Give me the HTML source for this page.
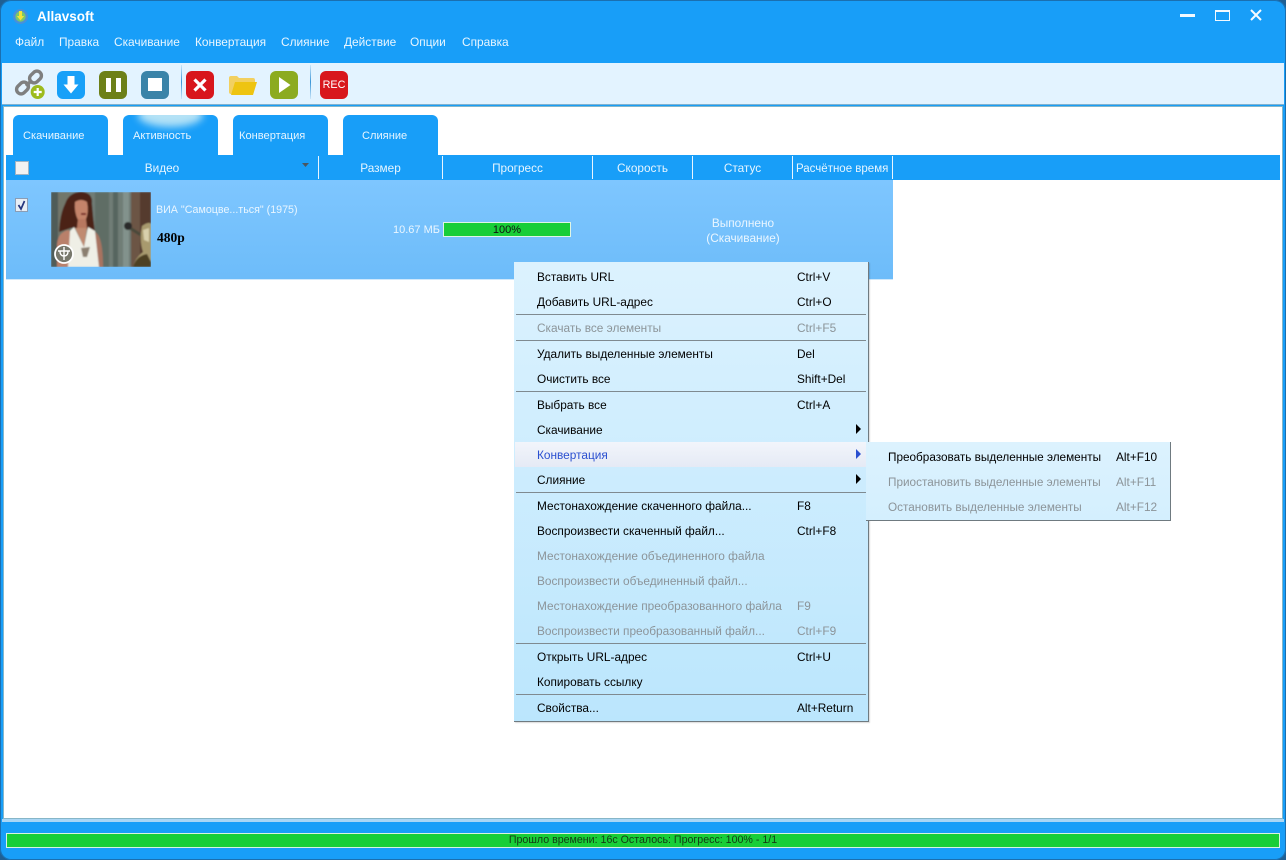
<!DOCTYPE html>
<html><head><meta charset="utf-8"><style>
html,body{margin:0;padding:0;width:1286px;height:860px;overflow:hidden;background:#1f5f93}
body{font-family:"Liberation Sans",sans-serif;font-size:11.85px;position:relative}
div,span,svg{position:absolute}
.t{white-space:nowrap;line-height:14px}
.c{text-align:center}
.w{color:#fff}
#win{left:0;top:0;width:1286px;height:860px;background:#189ef8;border-radius:11px;box-shadow:inset 0 0 0 1px #1a6fb0}
.m{color:#e9f6ff;font-size:11.9px;top:35px}
.tab{top:115px;width:95px;height:40px;background:#189ef8;border-radius:6px 6px 0 0}
.tt{color:#e6f5ff;top:129px;font-size:11.1px}
.sep{top:156px;width:1px;height:23px;background:#e8f5ff}
.h{top:161px;color:#e6f5ff;font-size:11.8px}
.i{left:537px;color:#000}
.s{left:797px;color:#000}
.g{color:#8c9499}
.ln{left:516px;width:350px;height:1px;background:#7f8a90}
.ar{width:0;height:0;border-left:5px solid #000;border-top:5px solid transparent;border-bottom:5px solid transparent;left:856px}
.btn{width:28px;height:28px;top:71px;border-radius:6px}
.tsep{top:65px;width:1px;height:34px;background:linear-gradient(rgba(60,150,215,.15),#3c96d7 50%,rgba(60,150,215,.15))}
</style></head><body>
<div id="win"></div>

<svg style="left:12px;top:8px" width="18" height="18" viewBox="0 0 18 18"><circle cx="8.500" cy="8.500" r="7.500" fill="#4a90d8"/><circle cx="8.500" cy="8.500" r="5.200" fill="#7cc66a"/><path d="M7 3h3v5h2.200l-3.700 4.500l-3.700-4.500H7Z" fill="#f0e43a"/></svg>
<div class="t w" style="left:37px;top:10px;font-weight:bold;font-size:13.5px">Allavsoft</div>

<div class="t m" style="left:15px">Файл</div>
<div class="t m" style="left:59px">Правка</div>
<div class="t m" style="left:114px">Скачивание</div>
<div class="t m" style="left:195px">Конвертация</div>
<div class="t m" style="left:281px">Слияние</div>
<div class="t m" style="left:344px">Действие</div>
<div class="t m" style="left:410px">Опции</div>
<div class="t m" style="left:462px">Справка</div>

<div style="left:1180px;top:14px;width:15px;height:3px;background:#f2f9ff"></div>
<div style="left:1215px;top:10px;width:13px;height:8px;border:1px solid #f2f9ff;border-top-width:2px;box-sizing:content-box"></div>
<svg style="left:1249px;top:8px" width="14" height="14" viewBox="0 0 14 14"><path d="M2 2L12 12M12 2L2 12" stroke="#f6fbff" stroke-width="2"/></svg>

<div style="left:2px;top:63px;width:1282px;height:41px;background:#e3f3ff"></div>
<div style="left:2px;top:104px;width:1282px;height:1px;background:#7fb2d0"></div>

<svg style="left:14px;top:68px" width="32" height="32" viewBox="0 0 32 32"><g fill="none" stroke="#7f7f7f" stroke-width="3.400"><rect x="15" y="4.500" width="13" height="9" rx="4.500" transform="rotate(-45 21.500 9)"/><rect x="2" y="15.500" width="13" height="9" rx="4.500" transform="rotate(-45 8.500 20)"/><path d="M12 18L18 12"/></g><circle cx="23.700" cy="24" r="7" fill="#9dbb1e"/><path d="M23.700 20v8M19.700 24h8" stroke="#fff" stroke-width="2.200"/></svg>

<div class="btn" style="left:57px;background:#18a0f8"></div>
<svg style="left:57px;top:71px" width="28" height="28" viewBox="0 0 28 28"><path d="M10.500 5h7v8.500h4L14 22.500l-7.500-9h4Z" fill="#fff"/></svg>
<div class="btn" style="left:99px;background:#6d8018"></div>
<div style="left:106px;top:78px;width:5px;height:14px;background:#fff"></div>
<div style="left:116px;top:78px;width:5px;height:14px;background:#fff"></div>
<div class="btn" style="left:141px;background:#3a83a8"></div>
<div style="left:148px;top:78px;width:14px;height:13px;background:#fff"></div>
<div class="tsep" style="left:181px"></div>
<div class="btn" style="left:186px;background:#d8161c"></div>
<svg style="left:186px;top:71px" width="28" height="28" viewBox="0 0 28 28"><path d="M8.500 8.500L19.500 19.500M19.500 8.500L8.500 19.500" stroke="#fff" stroke-width="3.200"/></svg>
<svg style="left:228px;top:75px" width="30" height="22" viewBox="0 0 30 22"><path d="M1 3Q1 1 3 1H9L11 3H25Q27 3 27 5V7H8L5 19H3Q1 19 1 17Z" fill="#f2d060"/><path d="M7 7H29L25 20H3Z" fill="#eec411"/></svg>
<div class="btn" style="left:270px;background:#8cab20"></div>
<svg style="left:270px;top:71px" width="28" height="28" viewBox="0 0 28 28"><path d="M9 6L20.500 14L9 22Z" fill="#fff"/></svg>
<div class="tsep" style="left:310px"></div>
<div class="btn" style="left:320px;background:#d8161c"></div>
<div class="t c w" style="left:320px;top:78px;width:28px;font-size:10.800px">REC</div>

<div style="left:3px;top:106px;width:1278px;height:711px;background:#fff;border:1px solid #86b6c8"></div>
<div style="left:2px;top:819px;width:1282px;height:3px;background:#a9d6f5"></div>

<div class="tab" style="left:13px"></div>
<div class="tab" style="left:123px;overflow:hidden"><div style="left:15px;top:-12px;width:65px;height:24px;border-radius:50%;background:#b4e2f6;filter:blur(4px)"></div></div>
<div class="tab" style="left:233px"></div>
<div class="tab" style="left:343px"></div>
<div class="t tt" style="left:23px">Скачивание</div>
<div class="t tt" style="left:133px">Активность</div>
<div class="t tt" style="left:239px">Конвертация</div>
<div class="t tt" style="left:362px">Слияние</div>

<div style="left:6px;top:155px;width:1274px;height:25px;background:#189ef8"></div>
<div style="left:15px;top:161px;width:12px;height:12px;background:#f2f2f2;border:1px solid #9fb4c4"></div>
<div class="t c h" style="left:112px;width:100px">Видео</div>
<svg style="left:301px;top:162px" width="9" height="6"><path d="M1 1h7L4.500 5Z" fill="#4a5660"/></svg>
<div class="sep" style="left:318px"></div>
<div class="t c h" style="left:319px;width:123px">Размер</div>
<div class="sep" style="left:442px"></div>
<div class="t c h" style="left:443px;width:149px">Прогресс</div>
<div class="sep" style="left:592px"></div>
<div class="t c h" style="left:593px;width:99px">Скорость</div>
<div class="sep" style="left:692px"></div>
<div class="t c h" style="left:693px;width:99px">Статус</div>
<div class="sep" style="left:792px"></div>
<div class="t h" style="left:796px;top:162px;font-size:11.5px">Расчётное время</div>
<div class="sep" style="left:892px"></div>

<div style="left:6px;top:180px;width:887px;height:99px;background:linear-gradient(#7ec6ff,#6dbcf9)"></div>
<div style="left:6px;top:279px;width:887px;height:1px;background:#cfe8fb"></div>
<div style="left:15px;top:198px;width:11px;height:12px;background:#e8eef5;border:1px solid #8a9db5"></div>
<svg style="left:16px;top:199px" width="11" height="12"><path d="M2.500 6L5 10L8.500 2" fill="none" stroke="#26367e" stroke-width="1.700"/></svg>

<svg style="left:51px;top:192px" width="100" height="75" viewBox="0 0 100 75"><defs><filter id="b"><feGaussianBlur stdDeviation=".8"/></filter></defs><g filter="url(#b)"><rect width="100" height="75" fill="#6f7d76"/><rect width="7" height="75" fill="#4f5c58"/><rect x="7" width="12" height="75" fill="#72776a"/><rect x="44" width="14" height="75" fill="#5f6d65"/><rect x="62" width="5" height="75" fill="#56655f"/><rect x="72" width="6" height="75" fill="#82928c"/><rect x="80" width="9" height="75" fill="#6c5545"/><rect x="89" width="11" height="75" fill="#553b2e"/>
<path d="M8 40Q9 22 14 12Q18 0 30 0Q42 0 41 12Q42 26 44 40L32 36L20 36Z" fill="#4b2213"/>
<path d="M24 10Q30 6 36 10Q38 20 35 27Q31 32 27 28Q23 20 24 10Z" fill="#c4846a"/><path d="M27 27h8l1 9h-10Z" fill="#b87860"/><path d="M30 21h5v2h-5Z" fill="#7a2a28"/>
<path d="M18 38Q7 40 6 52V75H20L22 48Z" fill="#b9806a"/><path d="M44 40Q52 44 52 75H46Z" fill="#a87360"/>
<path d="M19 39L23 35L33 55L37 35L44 39L48 75H17Z" fill="#efefe6"/><path d="M24 36L33 55L36 36Z" fill="#c08a70"/>
<path d="M30 56l9-1l-3 10h-4Z" fill="#8b7f70"/>
<path d="M76 34L96 47" stroke="#4a4a3a" stroke-width="3"/><circle cx="77" cy="34" r="4" fill="#2c2c2a"/>
<path d="M91 34Q98 29 100 32V75H82Q84 66 92 60Q88 48 91 34Z" fill="#a89a6e"/><path d="M82 75Q85 64 96 62L100 70V75Z" fill="#4e4024"/><path d="M92 38L98 36V50L93 48Z" fill="#d8d0ac"/></g>
<circle cx="13" cy="62" r="9" fill="#78786c" stroke="#fff" stroke-width="1.800"/><path d="M7 59h12M13 55v13M9 59q0 5 4 5M17 59q0 5-4 5" fill="none" stroke="#fff" stroke-width="1.400"/></svg>

<div class="t" style="left:156px;top:203px;color:#eaf6ff;font-size:10.7px">ВИА "Самоцве...ться" (1975)</div>
<div class="t" style="left:157px;top:231px;color:#000;font-weight:bold;font-size:13.500px;font-family:'Liberation Serif',serif">480p</div>
<div class="t" style="left:393px;top:223px;color:#eaf6ff;font-size:11px">10.67 МБ</div>
<div style="left:443px;top:222px;width:126px;height:13px;background:#18ce38;border:1px solid #dff5e5"></div>
<div class="t c" style="left:443px;top:223px;width:128px;color:#111;font-size:11px">100%</div>
<div class="t c" style="left:693px;top:216px;width:100px;color:#eaf6ff;line-height:15px">Выполнено<br>(Скачивание)</div>

<div style="left:514px;top:262px;width:354px;height:459px;background:linear-gradient(#dcf2fe,#bbe6fd);border-right:1px solid #6f7a80;border-bottom:1px solid #6f7a80;box-shadow:1px 1px 1px rgba(0,0,0,.15)"></div>
<div style="left:515px;top:442px;width:352px;height:25px;background:linear-gradient(#f2f5fb,#e5eaf5)"></div>
<div class="ln" style="top:314px"></div>
<div class="ln" style="top:340px"></div>
<div class="ln" style="top:391px"></div>
<div class="ln" style="top:492px"></div>
<div class="ln" style="top:643px"></div>
<div class="ln" style="top:694px"></div>

<div class="t i" style="top:270px">Вставить URL</div><div class="t s" style="top:270px">Ctrl+V</div>
<div class="t i" style="top:295px">Добавить URL-адрес</div><div class="t s" style="top:295px">Ctrl+O</div>
<div class="t i g" style="top:321px">Скачать все элементы</div><div class="t s g" style="top:321px">Ctrl+F5</div>
<div class="t i" style="top:347px">Удалить выделенные элементы</div><div class="t s" style="top:347px">Del</div>
<div class="t i" style="top:372px">Очистить все</div><div class="t s" style="top:372px">Shift+Del</div>
<div class="t i" style="top:398px">Выбрать все</div><div class="t s" style="top:398px">Ctrl+A</div>
<div class="t i" style="top:423px">Скачивание</div><div class="ar" style="top:424px"></div>
<div class="t i" style="top:448px;color:#2a4fd0">Конвертация</div><div class="ar" style="top:449px;border-left-color:#2a4fd0"></div>
<div class="t i" style="top:473px">Слияние</div><div class="ar" style="top:474px"></div>
<div class="t i" style="top:499px">Местонахождение скаченного файла...</div><div class="t s" style="top:499px">F8</div>
<div class="t i" style="top:524px">Воспроизвести скаченный файл...</div><div class="t s" style="top:524px">Ctrl+F8</div>
<div class="t i g" style="top:549px">Местонахождение объединенного файла</div>
<div class="t i g" style="top:574px">Воспроизвести объединенный файл...</div>
<div class="t i g" style="top:599px">Местонахождение преобразованного файла</div><div class="t s g" style="top:599px">F9</div>
<div class="t i g" style="top:624px">Воспроизвести преобразованный файл...</div><div class="t s g" style="top:624px">Ctrl+F9</div>
<div class="t i" style="top:650px">Открыть URL-адрес</div><div class="t s" style="top:650px">Ctrl+U</div>
<div class="t i" style="top:675px">Копировать ссылку</div>
<div class="t i" style="top:701px">Свойства...</div><div class="t s" style="top:701px">Alt+Return</div>

<div style="left:866px;top:442px;width:304px;height:78px;background:linear-gradient(#dcf2fe,#d4effe);border-right:1px solid #6f7a80;border-bottom:1px solid #6f7a80"></div>
<div class="t" style="left:888px;top:451px;color:#000;font-size:11.75px">Преобразовать выделенные элементы</div><div class="t" style="left:1116px;top:450px;color:#000">Alt+F10</div>
<div class="t g" style="left:888px;top:476px;font-size:11.75px">Приостановить выделенные элементы</div><div class="t g" style="left:1116px;top:475px">Alt+F11</div>
<div class="t g" style="left:888px;top:501px;font-size:11.75px">Остановить выделенные элементы</div><div class="t g" style="left:1116px;top:500px">Alt+F12</div>

<div style="left:6px;top:833px;width:1272px;height:13px;background:#18ce38;border:1px solid #d8f3e0"></div>
<div class="t c" style="left:6px;top:833px;width:1274px;color:#143a14;font-size:10.65px">Прошло времени: 16с Осталось: Прогресс: 100% - 1/1</div>
</body></html>
